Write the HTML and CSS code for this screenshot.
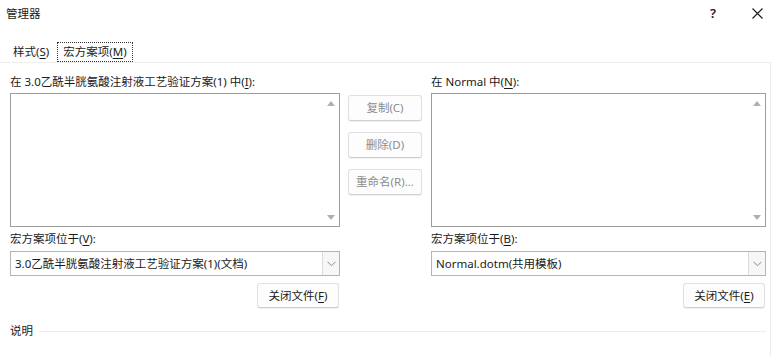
FILE: index.html
```html
<!DOCTYPE html>
<html lang="zh-CN">
<head>
    <meta charset="UTF-8">
    <title>管理器</title>
    <link rel="stylesheet" href="styles.css">
</head>
<body>
    <div class="titlebar">
        <span class="title">管理器</span>
        <span class="help">?</span>
        <span class="close">
            <svg width="11" height="11" viewBox="0 0 11 11"><path d="M0.5 0.5L10.5 10.5M10.5 0.5L0.5 10.5" stroke="#1a1a1a" stroke-width="1.1" fill="none"/></svg>
        </span>
    </div>

    <div class="tabs">
        <span class="tab">样式(<u>S</u>)</span>
        <span class="tab active">宏方案项(<u>M</u>)</span>
    </div>

    <div class="panel">
        <div class="lists">
            <!-- 左侧：当前文档 -->
            <div class="col">
                <div class="label">在 3.0乙酰半胱氨酸注射液工艺验证方案(1) 中(<u>I</u>):</div>
                <div class="listbox">
                    <div class="scroll"><span class="arrow up"></span><span class="arrow down"></span></div>
                </div>
                <div class="label gap">宏方案项位于(<u>V</u>):</div>
                <div class="combo">
                    <span class="value">3.0乙酰半胱氨酸注射液工艺验证方案(1)(文档)</span>
                    <span class="drop"><svg width="9" height="6" viewBox="0 0 9 6"><path d="M0.5 0.8L4.5 4.8L8.5 0.8" stroke="#8a8a8a" stroke-width="1" fill="none"/></svg></span>
                </div>
                <div class="row-end"><div class="btn">关闭文件(<u>F</u>)</div></div>
            </div>

            <!-- 中间按钮 -->
            <div class="actions">
                <div class="btn disabled">复制(C)</div>
                <div class="btn disabled">删除(D)</div>
                <div class="btn disabled">重命名(R)...</div>
            </div>

            <!-- 右侧：Normal -->
            <div class="col right">
                <div class="label">在 Normal 中(<u>N</u>):</div>
                <div class="listbox">
                    <div class="scroll"><span class="arrow up"></span><span class="arrow down"></span></div>
                </div>
                <div class="label gap">宏方案项位于(<u>B</u>):</div>
                <div class="combo">
                    <span class="value">Normal.dotm(共用模板)</span>
                    <span class="drop"><svg width="9" height="6" viewBox="0 0 9 6"><path d="M0.5 0.8L4.5 4.8L8.5 0.8" stroke="#8a8a8a" stroke-width="1" fill="none"/></svg></span>
                </div>
                <div class="row-end"><div class="btn">关闭文件(<u>E</u>)</div></div>
            </div>
        </div>

        <div class="desc">
            <span>说明</span>
            <span class="rule"></span>
        </div>
    </div>
</body>
</html>
```

FILE: styles.css
```css
/* 基本设置 */
body {
    margin: 0;
    background-color: #ffffff;
    color: #1a1a1a;
    font-family: "Noto Sans", "Noto Sans CJK SC", sans-serif;
    font-size: 11.5px;
}
u {
    text-decoration-thickness: 1px;
    text-underline-offset: 2px;
}

/* 标题栏 */
.titlebar {
    display: flex;
    align-items: center;
    height: 26px;
    padding-left: 6px;
}
.titlebar .title {
    flex: 1;
}
.titlebar .help {
    font-size: 13px;
    font-weight: 600;
    width: 42px;
}
.titlebar .close {
    width: 25px;
    display: flex;
    align-items: center;
}

/* 选项卡 */
.tabs {
    display: flex;
    margin-top: 16px;
    height: 20px;
    padding-left: 7px;
}
.tab {
    line-height: 18px;
    padding: 0 5px;
    border: 1px dotted transparent;
    margin-right: 2px;
}
.tab.active {
    border-color: #333333;
}

/* 选项卡面板 */
.panel {
    border-top: 1px solid #ededed;
    border-right: 1px solid #ededed;
    width: 771px;
    height: 295px;
    box-sizing: border-box;
    padding: 11px 0 0 10px;
}
.lists {
    display: grid;
    grid-template-columns: 330px 74px 336px;
    column-gap: 8px;
}
.col.right {
    margin-left: 1px;
}
.label {
    line-height: 16px;
    height: 16px;
    margin-bottom: 3px;
    white-space: nowrap;
}
.label.gap {
    margin-top: 4px;
    margin-bottom: 4px;
}

/* 列表框 */
.listbox {
    height: 134px;
    box-sizing: border-box;
    border: 1px solid #9c9c9c;
    display: flex;
    justify-content: flex-end;
}
.scroll {
    width: 17px;
    display: flex;
    flex-direction: column;
    justify-content: space-between;
    align-items: center;
    padding: 7px 0 6px;
}
.arrow {
    width: 0;
    height: 0;
    border-left: 4px solid transparent;
    border-right: 4px solid transparent;
}
.arrow.up {
    border-bottom: 5px solid #b0b0b0;
}
.arrow.down {
    border-top: 5px solid #b0b0b0;
}

/* 下拉框 */
.combo {
    height: 25px;
    box-sizing: border-box;
    border: 1px solid #b4b4b4;
    display: flex;
    align-items: stretch;
}
.combo .value {
    flex: 1;
    line-height: 23px;
    padding-left: 4px;
    white-space: nowrap;
}
.combo .drop {
    width: 16px;
    border-left: 1px solid #dcdcdc;
    background-color: #f7f7f7;
    display: flex;
    align-items: center;
    justify-content: center;
}

/* 按钮 */
.row-end {
    display: flex;
    justify-content: flex-end;
    margin-top: 7px;
    padding-right: 1px;
}
.btn {
    width: 82px;
    height: 25px;
    box-sizing: border-box;
    border: 1px solid #e0e0e0;
    border-bottom-color: #cfcfcf;
    border-radius: 3px;
    background-color: #fdfdfd;
    text-align: center;
    line-height: 23px;
    box-shadow: 0 1px 1px rgba(0, 0, 0, 0.06);
}
.actions {
    padding-top: 21px;
    display: flex;
    flex-direction: column;
    gap: 11px;
}
.actions .btn {
    width: 74px;
    height: 26px;
    line-height: 24px;
}
.btn.disabled {
    color: #8c8c8c;
}

/* 说明 */
.desc {
    display: flex;
    align-items: center;
    margin-top: 15px;
    width: 756px;
    line-height: 16px;
}
.desc .rule {
    flex: 1;
    height: 1px;
    background-color: #ececec;
    margin-left: 6px;
}
```
